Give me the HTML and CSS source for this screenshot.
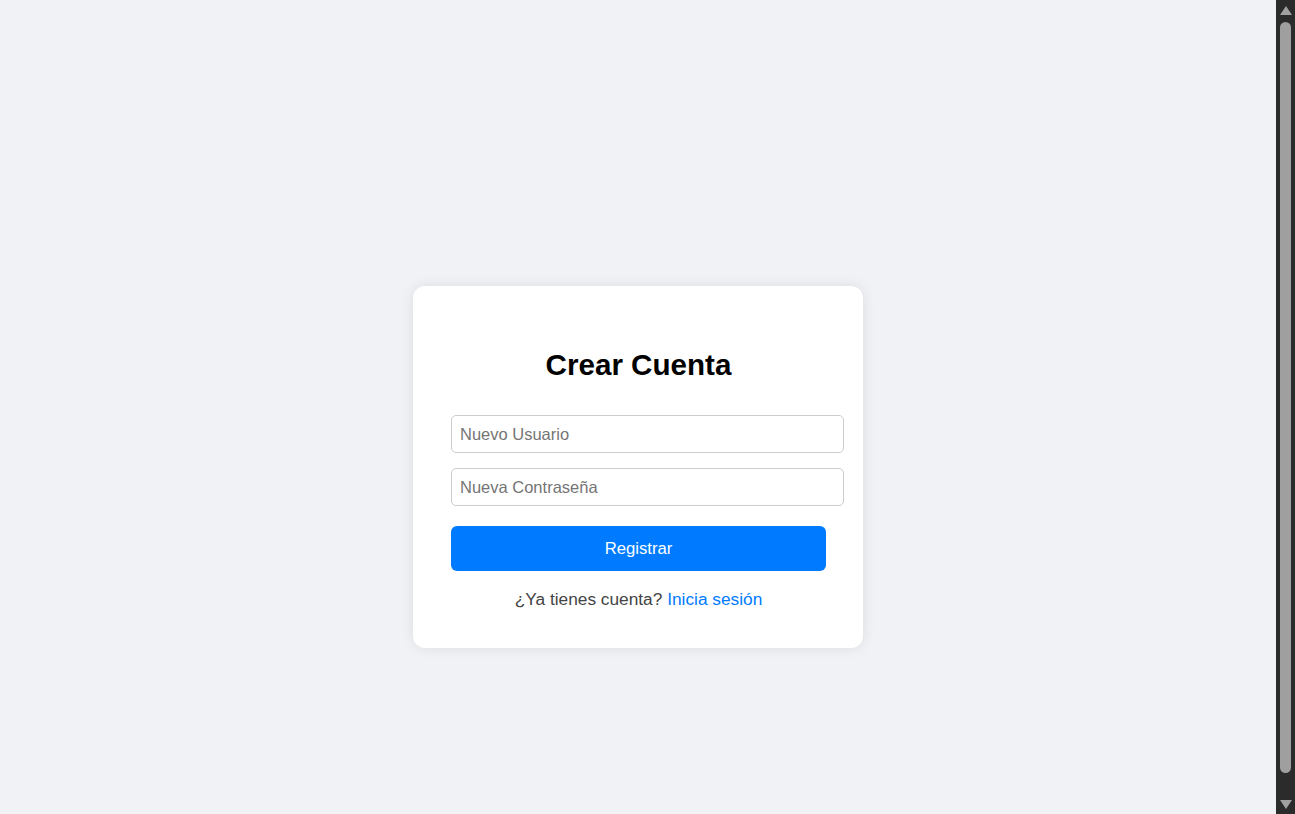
FILE: index.html
```html
<!DOCTYPE html>
<html lang="es">
<head>
<meta charset="utf-8">
<title>Crear Cuenta</title>
<link rel="stylesheet" href="styles.css">
</head>
<body>
<main class="page">
  <section class="card">
    <h2 class="title">Crear Cuenta</h2>
    <form class="form">
      <input class="field" type="text" placeholder="Nuevo Usuario">
      <input class="field" type="password" placeholder="Nueva Contraseña">
      <button class="submit" type="button">Registrar</button>
    </form>
    <p class="footer">¿Ya tienes cuenta? <a class="link" href="#">Inicia sesión</a></p>
  </section>
</main>
<aside class="scrollbar" aria-hidden="true">
  <span class="arrow arrow-up"></span>
  <span class="thumb"></span>
  <span class="arrow arrow-down"></span>
</aside>
</body>
</html>
```
FILE: styles.css
```css
html, body {
  margin: 0;
  padding: 0;
}

body {
  display: flex;
  height: 100vh;
  overflow: hidden;
  background: #f0f2f5;
  font-family: "Liberation Sans", Arial, sans-serif;
}

/* fake window scrollbar */
.scrollbar {
  flex: 0 0 19px;
  box-sizing: border-box;
  background: #2b2b2b;
  display: flex;
  flex-direction: column;
  align-items: center;
  padding: 6px 0 5px 0;
}

.arrow {
  width: 0;
  height: 0;
  border-left: 6px solid transparent;
  border-right: 6px solid transparent;
}

.arrow-up {
  border-bottom: 9px solid #a0a0a0;
}

.arrow-down {
  border-top: 9px solid #a0a0a0;
  margin-top: 27px;
}

.thumb {
  flex: 1;
  width: 11px;
  margin-top: 7px;
  background: #9f9f9f;
  border-radius: 6px;
}

.page {
  flex: 1;
  box-sizing: border-box;
  padding-top: 286px;
  display: flex;
  justify-content: center;
  align-items: flex-start;
}

.card {
  box-sizing: border-box;
  width: 450px;
  background: #ffffff;
  border-radius: 12px;
  box-shadow: 0 0 14px rgba(0, 0, 0, 0.09);
  padding: 62px 37px 39px 38px;
  text-align: center;
}

.title {
  margin: 0;
  font-size: 29.6px;
  font-weight: bold;
  color: #000;
  line-height: 34px;
}

.form {
  display: flex;
  flex-direction: column;
  align-items: flex-start;
  margin-top: 33px;
}

.field {
  box-sizing: content-box;
  width: 100%;
  height: 36px;
  padding: 0 8px;
  margin: 0 0 15px 0;
  border: 1px solid #cccccc;
  border-radius: 5px;
  font-family: "Liberation Sans", Arial, sans-serif;
  font-size: 16.5px;
  color: #222;
  background: #fff;
  outline: none;
}
.field::placeholder {
  color: #757575;
}

.submit {
  width: 100%;
  height: 45px;
  margin-top: 5px;
  border: none;
  border-radius: 6px;
  background: #007bff;
  color: #ffffff;
  font-family: "Liberation Sans", Arial, sans-serif;
  font-size: 16.7px;
  cursor: pointer;
}

.footer {
  margin: 18px 0 0 0;
  font-size: 17.3px;
  line-height: 20px;
  color: #444444;
}

.link {
  color: #007bff;
  text-decoration: none;
}
```
